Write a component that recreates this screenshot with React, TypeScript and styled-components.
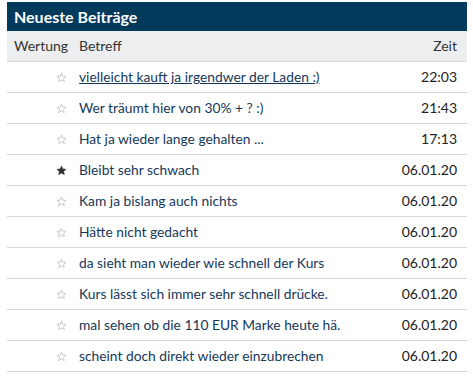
import React from "react";
import styled, { createGlobalStyle } from "styled-components";

const Global = createGlobalStyle`
  html, body { margin: 0; padding: 0; background: #fff; }
  body { font-family: Lato, "Open Sans", sans-serif; }
`;

const Widget = styled.section`
  margin: 2px 6px 0 7px;
  width: 460px;
`;

const Title = styled.h2`
  margin: 0;
  height: 29px;
  background: #023a5c;
  color: #fff;
  font-size: 16px;
  font-weight: 700;
  line-height: 29px;
  padding-left: 7px;
`;

const Table = styled.div`
  display: grid;
  grid-template-columns: 70px 1fr 70px;
`;

const HeadCell = styled.div<{ $align?: string; $pad?: number }>`
  background: #eceef0;
  height: 30px;
  line-height: 30px;
  font-size: 14px;
  color: #333;
  border-bottom: 1px solid #d4d6d8;
  text-align: ${(p) => p.$align || "left"};
  padding-left: ${(p) => p.$pad ?? 0}px;
  padding-right: ${(p) => (p.$align === "right" ? 10 : 0)}px;
`;

const Cell = styled.div<{ $align?: string }>`
  height: 30px;
  line-height: 30px;
  font-size: 14px;
  border-bottom: 1px solid #d4d6d8;
  white-space: nowrap;
  overflow: hidden;
  text-align: ${(p) => p.$align || "left"};
  color: #222;
  padding-right: ${(p) => (p.$align === "right" ? "10px" : "0")};
`;

const StarCell = styled(Cell)`
  display: flex;
  justify-content: flex-end;
  align-items: center;
  padding-right: 10px;
`;

const Subject = styled.a<{ $underline?: boolean }>`
  color: #15385a;
  font-size: 13.8px;
  text-decoration: ${(p) => (p.$underline ? "underline" : "none")};
  padding-left: 2px;
`;

const Star = ({ filled }: { filled?: boolean }) => (
  <svg width="11" height="11" viewBox="0 0 24 24">
    <path
      d="M12 2.5l2.8 6.4 6.9.6-5.2 4.6 1.6 6.8L12 17.3l-6.1 3.6 1.6-6.8-5.2-4.6 6.9-.6z"
      fill={filled ? "#333" : "none"}
      stroke={filled ? "#333" : "#b5b8bb"}
      strokeWidth="1.6"
      strokeLinejoin="round"
    />
  </svg>
);

const rows = [
  { s: "vielleicht kauft ja irgendwer der Laden :)", t: "22:03", u: true },
  { s: "Wer träumt hier von 30% + ? :)", t: "21:43" },
  { s: "Hat ja wieder lange gehalten ...", t: "17:13" },
  { s: "Bleibt sehr schwach", t: "06.01.20", f: true },
  { s: "Kam ja bislang auch nichts", t: "06.01.20" },
  { s: "Hätte nicht gedacht", t: "06.01.20" },
  { s: "da sieht man wieder wie schnell der Kurs", t: "06.01.20" },
  { s: "Kurs lässt sich immer sehr schnell drücke.", t: "06.01.20" },
  { s: "mal sehen ob die 110 EUR Marke heute hä.", t: "06.01.20" },
  { s: "scheint doch direkt wieder einzubrechen", t: "06.01.20" },
];

export default function App() {
  return (
    <>
      <Global />
      <Widget>
        <Title>Neueste Beiträge</Title>
        <Table>
          <HeadCell $pad={7}>Wertung</HeadCell>
          <HeadCell $pad={2}>Betreff</HeadCell>
          <HeadCell $align="right">Zeit</HeadCell>
          {rows.map((r, i) => (
            <React.Fragment key={i}>
              <StarCell>
                <Star filled={r.f} />
              </StarCell>
              <Cell>
                <Subject href="#" $underline={r.u}>{r.s}</Subject>
              </Cell>
              <Cell $align="right">{r.t}</Cell>
            </React.Fragment>
          ))}
        </Table>
      </Widget>
    </>
  );
}
